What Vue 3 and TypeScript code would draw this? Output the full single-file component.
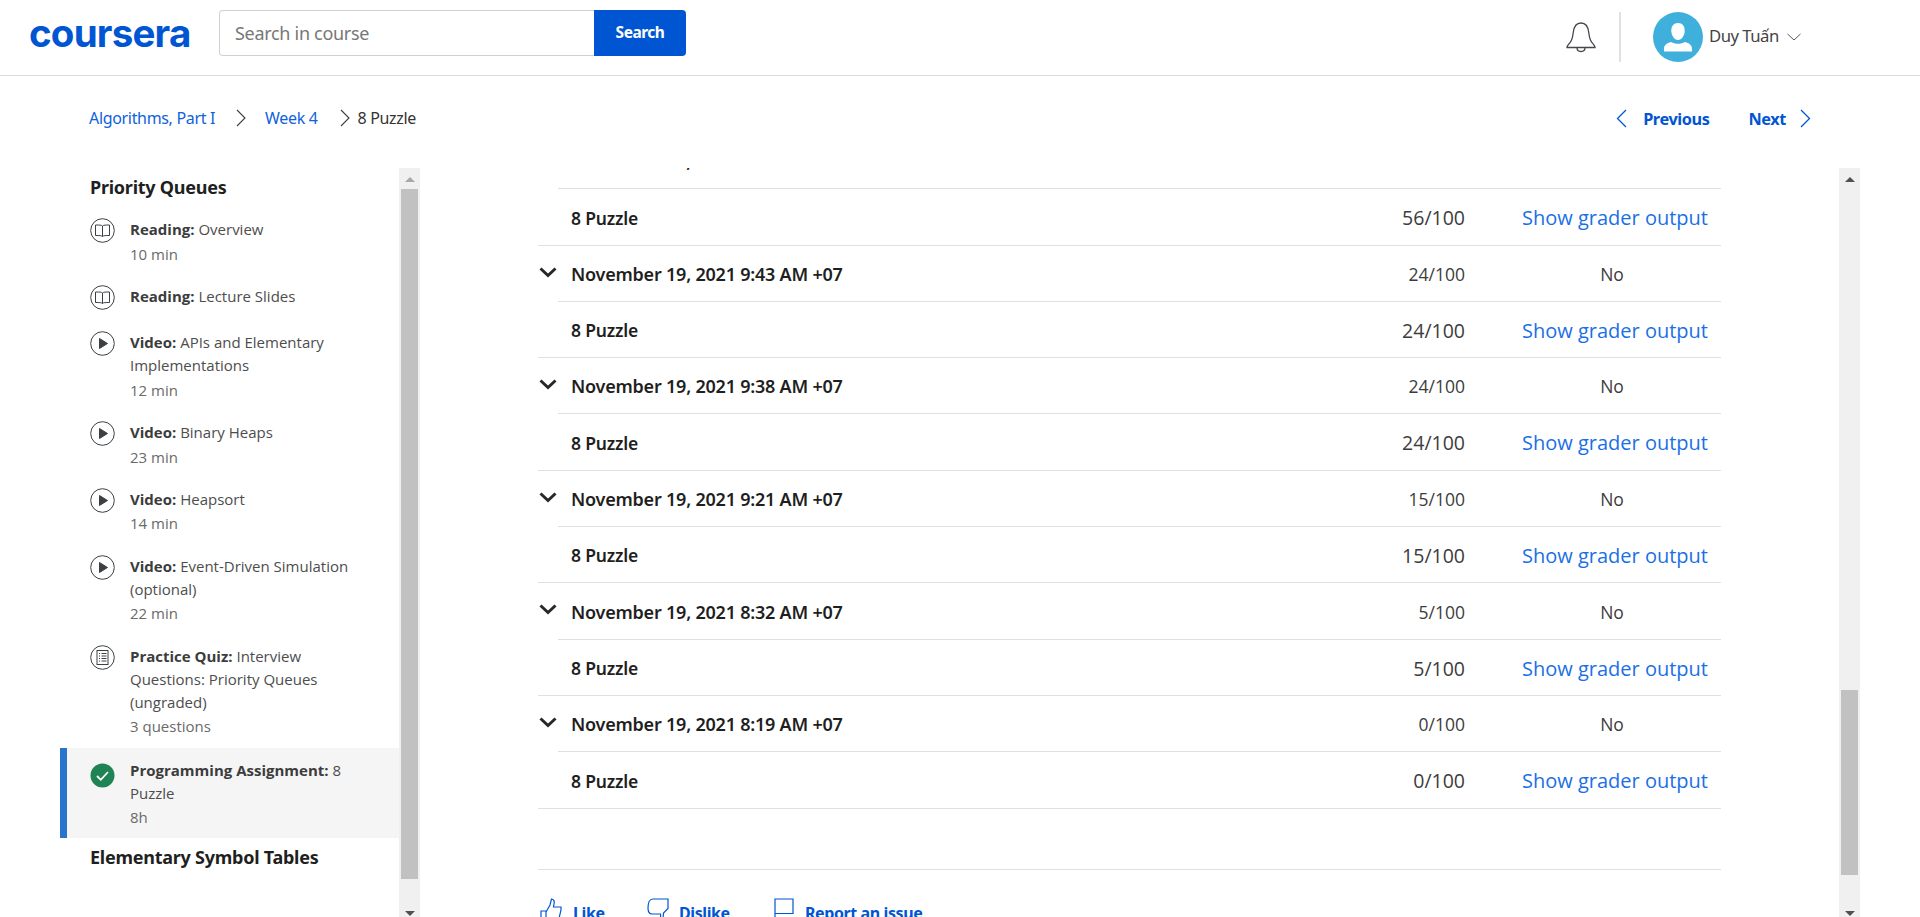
<script setup lang="ts">
interface Item { kind: string; label: string; text: string; meta?: string; active?: boolean }
const items: Item[] = [
  { kind: 'book', label: 'Reading:', text: 'Overview', meta: '10 min' },
  { kind: 'book', label: 'Reading:', text: 'Lecture Slides' },
  { kind: 'play', label: 'Video:', text: 'APIs and Elementary Implementations', meta: '12 min' },
  { kind: 'play', label: 'Video:', text: 'Binary Heaps', meta: '23 min' },
  { kind: 'play', label: 'Video:', text: 'Heapsort', meta: '14 min' },
  { kind: 'play', label: 'Video:', text: 'Event-Driven Simulation (optional)', meta: '22 min' },
  { kind: 'quiz', label: 'Practice Quiz:', text: 'Interview Questions: Priority Queues (ungraded)', meta: '3 questions' },
  { kind: 'done', label: 'Programming Assignment:', text: '8 Puzzle', meta: '8h', active: true },
]
const subs = [
  { date: 'November 19, 2021 9:52 AM +07', score: '56/100' },
  { date: 'November 19, 2021 9:43 AM +07', score: '24/100' },
  { date: 'November 19, 2021 9:38 AM +07', score: '24/100' },
  { date: 'November 19, 2021 9:21 AM +07', score: '15/100' },
  { date: 'November 19, 2021 8:32 AM +07', score: '5/100' },
  { date: 'November 19, 2021 8:19 AM +07', score: '0/100' },
]
</script>

<template>
  <div class="page">
    <header class="top">
      <div class="logo">coursera</div>
      <div class="search">
        <div class="search-input">Search in course</div>
        <div class="search-btn">Search</div>
      </div>
      <div class="grow"></div>
      <svg class="bell" width="30" height="31" viewBox="0 0 30 31" fill="none" stroke="#44474c" stroke-width="1.3">
        <path d="M1 25.5h28c0-2-1.6-3.2-3.2-5.2-2.2-2.8-2.6-6-3-9.6C22.2 5 19.5 1 15 1S7.800 5 7.200 10.700c-.4 3.600-.8 6.800-3 9.600C2.600 22.300 1 23.500 1 25.500z"/>
        <path d="M11 25.500c0 2.500 1.800 4 4 4s4-1.500 4-4"/>
      </svg>
      <div class="divider"></div>
      <div class="avatar">
        <svg width="50" height="50" viewBox="0 0 50 50">
          <circle cx="25" cy="25" r="25" fill="#3fb0dc"/>
          <path d="M25 11c4.400 0 6.700 3.300 6.700 7.500 0 4.500-2.800 9.500-6.700 9.500s-6.700-5-6.700-9.500C18.300 14.300 20.600 11 25 11z" fill="#fff"/>
          <path d="M11 39.500v-2.500c0-4 3-6 7-7 2 1.200 4.500 1.800 7 1.800s5-.6 7-1.800c4 1 7 3 7 7v2.500z" fill="#fff"/>
        </svg>
      </div>
      <div class="user">Duy Tuấn</div>
      <svg class="caret" width="14" height="8" viewBox="0 0 14 8" fill="none" stroke="#55585c" stroke-width="1"><path d="M.5 1l6.500 6 6.500-6"/></svg>
    </header>

    <nav class="crumbs">
      <a class="crumb">Algorithms, Part I</a>
      <svg class="sep" width="14" height="18" viewBox="0 0 14 18" fill="none" stroke="#3c3f43" stroke-width="1.100"><path d="M3 1l8 8-8 8"/></svg>
      <a class="crumb">Week 4</a>
      <svg class="sep sep2" width="14" height="18" viewBox="0 0 14 18" fill="none" stroke="#3c3f43" stroke-width="1.100"><path d="M3 1l8 8-8 8"/></svg>
      <span class="crumb-cur">8 Puzzle</span>
      <div class="grow"></div>
      <svg class="pager-ico" width="11" height="19" viewBox="0 0 11 19" fill="none" stroke="#0056d2" stroke-width="1.300"><path d="M10 1L1.500 9.500 10 18"/></svg>
      <a class="pager prev">Previous</a>
      <a class="pager next">Next</a>
      <svg class="pager-ico next-ico" width="11" height="19" viewBox="0 0 11 19" fill="none" stroke="#0056d2" stroke-width="1.300"><path d="M1 1l8.500 8.500L1 18"/></svg>
    </nav>

    <div class="body">
      <aside class="side">
        <div class="side-list">
          <h3 class="side-title">Priority Queues</h3>
          <div v-for="it in items" :key="it.text" class="item" :class="{ active: it.active, bare: !it.meta }">
            <svg class="ico" width="25" height="25" viewBox="0 0 25 25" fill="none" stroke="#3c4043" stroke-width="1">
              <template v-if="it.kind === 'done'">
                <circle cx="12.500" cy="12.500" r="12" fill="#1f8354" stroke="none"/>
                <path d="M7 13l3.800 3.800L18 9" stroke="#fff" stroke-width="1.800"/>
              </template>
              <template v-else>
                <circle cx="12.500" cy="12.500" r="11.800"/>
                <template v-if="it.kind === 'book'">
                  <path d="M12.500 8c-1-1-3-1-7-1v10.500c4 0 6 0 7 1 1-1 3-1 7-1V7c-4 0-6 0-7 1zM12.500 8v10.500"/>
                </template>
                <path v-else-if="it.kind === 'play'" d="M9.500 7.500l8 5-8 5z" fill="#3c4043"/>
                <template v-else>
                  <rect x="7" y="5.500" width="11" height="14"/>
                  <path d="M9 8.500h1M11.500 8.500h5M9 11h1M11.500 11h5M9 13.500h1M11.500 13.500h5M9 16h1M11.500 16h5"/>
                </template>
              </template>
            </svg>
            <div class="item-text">
              <div class="item-name"><b>{{ it.label }}</b> {{ it.text }}</div>
              <div v-if="it.meta" class="item-meta">{{ it.meta }}</div>
            </div>
          </div>
          <h3 class="side-title second">Elementary Symbol Tables</h3>
        </div>
        <div class="bar">
          <i class="arrow up light"></i>
          <div class="thumb left-thumb"></div>
          <div class="grow"></div>
          <i class="arrow down"></i>
        </div>
      </aside>

      <main class="main">
        <div class="content">
          <div class="rows">
            <template v-for="s in subs" :key="s.date">
              <div class="date-row">
                <svg class="fold" width="18" height="11" viewBox="0 0 18 11" fill="none" stroke="#26292c" stroke-width="3"><path d="M1.500 1.500L9 8.500l7.500-7"/></svg>
                <div class="date-inner">
                  <span class="date">{{ s.date }}</span>
                  <span class="score small">{{ s.score }}</span>
                  <span class="action no">No</span>
                </div>
              </div>
              <div class="sub-row">
                <span class="name">8 Puzzle</span>
                <span class="score">{{ s.score }}</span>
                <a class="action link">Show grader output</a>
              </div>
            </template>
          </div>
          <div class="feedback">
            <div class="fb fb-like">
              <svg width="22" height="24" viewBox="0 0 22 24" fill="none" stroke="#0056d2" stroke-width="1.200"><path d="M1 13h5v10H1zM6 14l4-7 1.500-6c2 .3 3 1.700 2.700 4L13.500 9H21v3l-2.500 10.500H6"/></svg>
              <span>Like</span>
            </div>
            <div class="fb fb-dis">
              <svg width="22" height="24" viewBox="0 0 22 24" fill="none" stroke="#0056d2" stroke-width="1.200"><path d="M6 1h15v9.500L16.500 15l-.5 6c-.5 1-2 1.500-3 1 .5-2 .8-4 .5-6H5C2 16 1 13 1 10 1 5 2.500 1 6 1z"/></svg>
              <span>Dislike</span>
            </div>
            <div class="fb fb-flag">
              <svg width="20" height="24" viewBox="0 0 20 24" fill="none" stroke="#0056d2" stroke-width="1.200"><path d="M1 24V1h18v14.500H1"/></svg>
              <span>Report an issue</span>
            </div>
          </div>
        </div>
        <div class="bar right-bar">
          <i class="arrow up"></i>
          <div class="grow"></div>
          <div class="thumb right-thumb"></div>
          <div class="spacer-b"></div>
          <i class="arrow down"></i>
        </div>
      </main>
    </div>
  </div>
</template>

<style>
html, body { margin: 0; background: #fff; overflow: hidden; }
</style>

<style scoped>
.page {
  height: 917px;
  width: 1920px;
  overflow: hidden;
  display: flex;
  flex-direction: column;
  font-family: "Noto Sans", "Open Sans", sans-serif;
  color: #1f1f1f;
}
.grow { flex: 1 1 auto; }
.top {
  height: 76px;
  flex: none;
  box-sizing: border-box;
  border-bottom: 1px solid #dcdcdc;
  display: flex;
  align-items: center;
  padding: 0 119px 0 29px;
}
.logo {
  width: 161px;
  font-family: Inter, sans-serif;
  font-weight: 700;
  font-size: 38.500px;
  line-height: 40px;
  letter-spacing: -0.8px;
  color: #0056d2;
  margin-top: -9px;
}
.search { display: flex; margin: -9px 0 0 29px; height: 46px; }
.search-input {
  width: 375px;
  box-sizing: border-box;
  border: 1px solid #cfd0d8;
  border-right: 0;
  border-radius: 4px 0 0 4px;
  padding-left: 15px;
  font-size: 18px;
  line-height: 44px;
  letter-spacing: -0.3px;
  color: #777;
}
.search-btn {
  width: 92px;
  background: #0056d2;
  color: #fff;
  border-radius: 0 4px 4px 0;
  font-weight: 700;
  font-size: 15.500px;
  letter-spacing: -0.5px;
  text-align: center;
  line-height: 44px;
}
.bell { margin: -1px 1px 0 0; }
.divider { width: 2px; height: 50px; background: #e1e1e1; margin: -2px 32px 0 22px; }
.avatar { width: 50px; height: 50px; margin: -2px 0 0 0; }
.user { margin-left: 6px; font-size: 16.700px; letter-spacing: -0.5px; color: #444; margin-top: -4px; width: 78px; }
.caret { margin: -1px 0 0 0; }

.crumbs {
  height: 92px;
  flex: none;
  box-sizing: border-box;
  padding: 32px 109px 40px 89px;
  display: flex;
  align-items: center;
  font-size: 16px;
  letter-spacing: -0.33px;
}
.crumb { color: #0f62dc; }
.crumb-cur { color: #333; margin-left: 6px; }
.sep { margin: 0 17px 0 19px; }
.sep2 { margin: 0 0 0 20px; }
.pager { color: #0056d2; font-weight: 700; font-size: 16.300px; letter-spacing: -0.4px; margin-top: 1px; }
.pager-ico { margin-top: 1px; }
.prev { margin-left: 16px; }
.next { margin-left: 39px; }
.next-ico { margin-left: 14px; }

.body { flex: 1 1 auto; display: flex; min-height: 0; padding-left: 60px; }
.side { width: 360px; flex: none; display: flex; min-height: 0; }
.side-list { flex: 1 1 auto; min-width: 0; }
.side-title {
  margin: 0;
  padding: 7px 0 0 30px;
  font-size: 18px;
  line-height: 24px;
  font-weight: 700;
  letter-spacing: -0.25px;
  color: #1f1f1f;
}
.item {
  display: flex;
  box-sizing: border-box;
  padding: 0 49px 0 30px;
  margin-top: 19.300px;
}
.item.bare { padding-bottom: 2px; }
.item.active {
  background: #f5f5f5;
  border-left: 7px solid #2a73cc;
  padding: 10.500px 49px 9px 23px;
  margin-top: 10px;
}
.ico { flex: none; margin: 0 15px 0 0; }
.active .ico { margin-top: 4px; }
.item-text { font-family: "Open Sans", sans-serif; font-size: 15px; line-height: 23px; color: #4d4d4d; min-width: 0; }
.item-name b { font-weight: 700; color: #3c3c3c; }
.item-meta { color: #6a6a6a; margin-top: 1.500px; }

.bar {
  width: 21px;
  flex: none;
  background: #f0f0f0;
  display: flex;
  flex-direction: column;
  align-items: center;
  height: 749px;
}
.arrow { display: block; width: 0; height: 0; border-left: 5px solid transparent; border-right: 5px solid transparent; flex: none; }
.arrow.up { border-bottom: 5px solid #505050; margin: 9px 0 7px; }
.arrow.up.light { border-bottom-color: #a8a8a8; }
.arrow.down { border-top: 5px solid #505050; margin-bottom: 1px; }
.thumb { width: 17px; background: #c1c1c1; flex: none; }
.left-thumb { height: 690px; }
.right-thumb { height: 185px; }
.spacer-b { height: 36px; flex: none; }

.main { flex: 1 1 auto; display: flex; min-width: 0; padding-left: 118px; padding-right: 60px; justify-content: space-between; }
.content { width: 1183px; flex: none; overflow: hidden; }
.rows { margin-top: -35px; }
.date-row { display: flex; height: 56.300px; }
.fold { flex: none; margin: 21px 1px 0 1px; }
.date-inner, .sub-row {
  flex: 1 1 auto;
  display: flex;
  align-items: center;
  box-sizing: border-box;
  border-bottom: 1px solid #e0e0e0;
}
.date-inner { padding-left: 13px; padding-top: 1px; }
.sub-row { height: 56.300px; padding-left: 33px; padding-top: 1.500px; }
.date { width: 700px; flex: none; font-weight: 600; font-size: 18px; letter-spacing: -0.22px; color: #1f1f1f; }
.name { width: 700px; flex: none; font-weight: 600; font-size: 17.500px; letter-spacing: -0.2px; color: #1f1f1f; }
.score { margin-left: auto; width: 90px; text-align: right; font-family: "Open Sans", sans-serif; font-size: 19.500px; color: #3c3c3c; }
.score.small { font-size: 17.500px; }
.action { width: 256px; flex: none; box-sizing: border-box; font-family: "Open Sans", sans-serif; }
.no { text-align: center; padding-left: 38px; font-size: 17.500px; color: #3c3c3c; }
.link { text-align: right; padding-right: 13px; font-size: 20px; color: #1a6fe6; }
.feedback { margin-top: 60px; border-top: 1px solid #e0e0e0; height: 80px; display: flex; padding-top: 28px; box-sizing: border-box; color: #0056d2; font-weight: 700; font-size: 16px; letter-spacing: -0.4px; }
.fb { display: flex; align-items: flex-start; height: 30px; }
.fb span { line-height: 24px; margin-top: 3px; }
.fb-like { margin-left: 2px; width: 107px; gap: 11px; }
.fb-dis { width: 127px; gap: 10px; }
.fb-flag { gap: 11px; }
</style>
